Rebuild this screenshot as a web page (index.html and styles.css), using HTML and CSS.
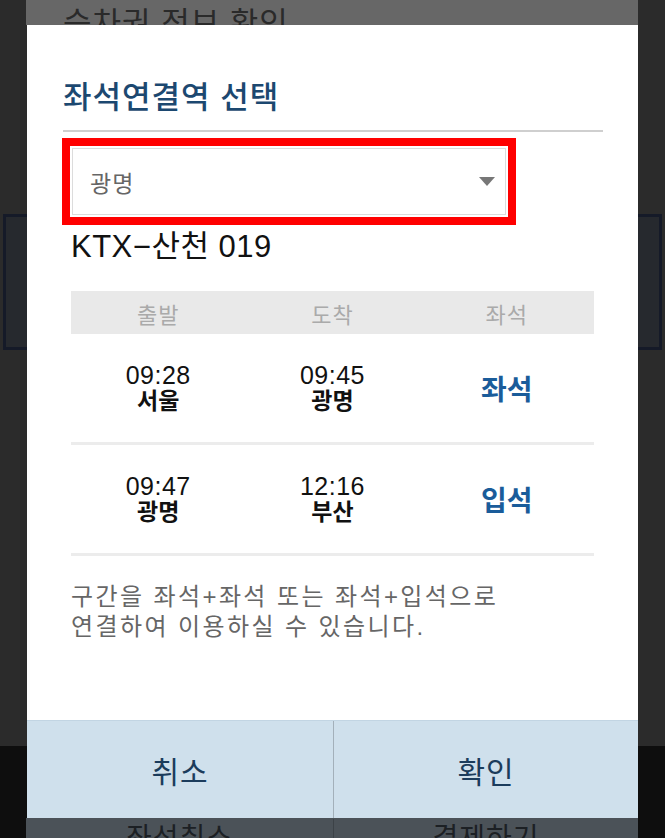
FILE: index.html
```html
<!DOCTYPE html>
<html lang="ko">
<head>
    <meta charset="UTF-8">
    <meta name="viewport" content="width=device-width, initial-scale=1.0">
    <title>좌석연결역 선택</title>
    <link rel="stylesheet" href="styles.css">
</head>
<body>
    <div class="screen">
        <!-- 뒤쪽 화면 (어둡게 가려짐) -->
        <div class="page-head"><span>승차권 정보 확인</span></div>
        <div class="page-gap1"></div>
        <div class="page-box"></div>
        <div class="page-gap2"></div>
        <div class="page-foot">
            <div class="foot-bar">
                <span>좌석취소</span>
                <span>결제하기</span>
            </div>
        </div>

        <!-- 좌석연결역 선택 팝업 -->
        <div class="dialog">
            <div class="dialog-body">
                <h2 class="dialog-title">좌석연결역 선택</h2>
                <div class="picker">
                    <div class="select">
                        <span>광명</span>
                        <span class="caret"></span>
                    </div>
                </div>
                <div class="train-name">KTX−산천 019</div>
                <div class="table">
                    <div class="thead">
                        <div>출발</div>
                        <div>도착</div>
                        <div>좌석</div>
                    </div>
                    <div class="trow">
                        <div class="stop"><span class="time">09:28</span><span class="st">서울</span></div>
                        <div class="stop"><span class="time">09:45</span><span class="st">광명</span></div>
                        <div class="seat">좌석</div>
                    </div>
                    <div class="trow">
                        <div class="stop"><span class="time">09:47</span><span class="st">광명</span></div>
                        <div class="stop"><span class="time">12:16</span><span class="st">부산</span></div>
                        <div class="seat">입석</div>
                    </div>
                </div>
                <p class="note">구간을 좌석+좌석 또는 좌석+입석으로<br>연결하여 이용하실 수 있습니다.</p>
            </div>
            <div class="dialog-btns">
                <button type="button">취소</button>
                <button type="button">확인</button>
            </div>
        </div>
    </div>
</body>
</html>
```

FILE: styles.css
```css
/* 기본 */
* {
    margin: 0;
    padding: 0;
    box-sizing: border-box;
}
body {
    font-family: "Liberation Sans", "Noto Sans CJK KR", sans-serif;
    background-color: #2b2b2b;
}
.screen {
    position: relative;
    width: 665px;
    height: 838px;
    overflow: hidden;
    background-color: #2b2b2b;
}

/* 뒤쪽 화면 */
.page-head {
    margin: 0 27px 0 26px;
    height: 25px;
    overflow: hidden;
    background-color: #676767;
    padding: 6px 0 0 37px;
    font-size: 31px;
    line-height: 36px;
    letter-spacing: 1px;
    color: #2a2a2a;
}
.page-gap1 {
    height: 189px;
}
.page-box {
    height: 136px;
    margin: 0 3px;
    border: 3px solid #151a28;
    background-color: #26292e;
}
.page-gap2 {
    height: 396px;
}
.page-foot {
    height: 92px;
    background-color: #0e0e0e;
    padding-top: 72px;
}
.foot-bar {
    margin: 0 27px 0 26px;
    height: 20px;
    overflow: hidden;
    background-color: #4b5258;
    display: grid;
    grid-template-columns: 307px 1fr;
}
.foot-bar span {
    text-align: center;
    font-size: 28px;
    line-height: 40px;
    margin-top: 1px;
    letter-spacing: 1px;
    color: #1c2024;
}
.foot-bar span + span {
    border-left: 1px solid #3c4247;
}

/* 팝업 */
.dialog {
    position: absolute;
    left: 27px;
    top: 25px;
    width: 611px;
    height: 793px;
    background-color: #fff;
    display: flex;
    flex-direction: column;
}
.dialog-body {
    flex: 1;
    padding: 53px 35px 0 36px;
}
.dialog-title {
    font-size: 31px;
    font-weight: 500;
    line-height: 40px;
    letter-spacing: 1px;
    color: #1c4870;
    padding-bottom: 12px;
    border-bottom: 2px solid #cfcfcf;
}

/* 역 선택 박스 */
.picker {
    width: 454px;
    margin-top: 6px;
    margin-left: -1px;
    border: 8px solid #ff0000;
    padding: 2px;
}
.select {
    height: 67px;
    border: 1px solid #dcdcdc;
    display: flex;
    align-items: center;
    justify-content: space-between;
    padding: 0 10px 0 17px;
    font-size: 23px;
    letter-spacing: 1px;
    color: #666;
}
.caret {
    width: 0;
    height: 0;
    border-left: 8px solid transparent;
    border-right: 8px solid transparent;
    border-top: 9px solid #777;
}

.train-name {
    margin: 0 0 22px 8px;
    font-size: 31px;
    line-height: 44px;
    letter-spacing: 0.5px;
    color: #111;
}

/* 구간 표 */
.table {
    margin-left: 8px;
    width: 523px;
}
.thead,
.trow {
    display: grid;
    grid-template-columns: 1fr 1fr 1fr;
    text-align: center;
}
.thead {
    height: 43px;
    align-items: center;
    background-color: #e9e9e9;
    font-size: 22px;
    letter-spacing: 1px;
    color: #aaa;
}
.trow {
    height: 111px;
    align-items: center;
    border-bottom: 3px solid #ececec;
}
.stop {
    display: flex;
    flex-direction: column;
    color: #111;
}
.stop .time {
    font-size: 25px;
    line-height: 26px;
    letter-spacing: 0.5px;
}
.stop .st {
    font-size: 23px;
    line-height: 26px;
    font-weight: 700;
}
.seat {
    font-size: 28px;
    font-weight: 700;
    color: #1a5c9a;
}

.note {
    margin: 26px 0 0 8px;
    font-size: 24px;
    line-height: 30px;
    letter-spacing: 2.4px;
    color: #666;
}

/* 하단 버튼 */
.dialog-btns {
    height: 98px;
    display: grid;
    grid-template-columns: 306px 1fr;
    background-color: #cfe0ec;
    border-top: 1px solid #c2d5e3;
}
.dialog-btns button {
    border: none;
    background: none;
    font-family: inherit;
    font-size: 30px;
    letter-spacing: 1px;
    color: #1b3c5c;
}
.dialog-btns button + button {
    border-left: 1px solid #a3b0ba;
}
```
